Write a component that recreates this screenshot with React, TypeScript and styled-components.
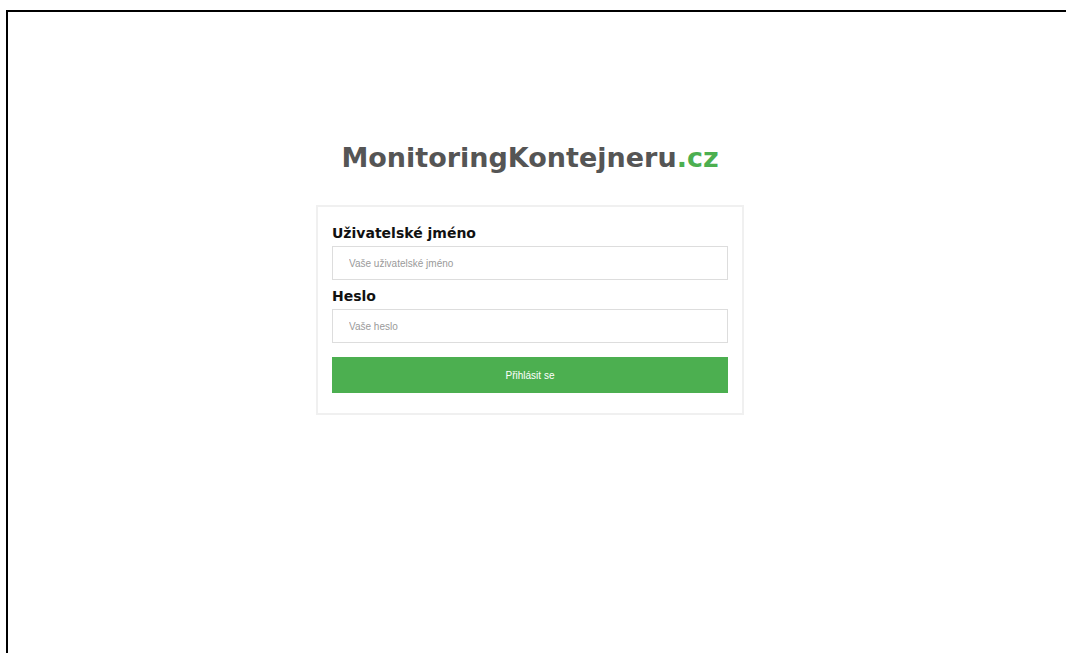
import React from "react";
import styled, { createGlobalStyle } from "styled-components";

const GlobalStyle = createGlobalStyle`
  html, body {
    margin: 0;
    padding: 0;
    background: #fff;
    overflow: hidden;
  }
  body {
    font-family: "DejaVu Sans", Verdana, sans-serif;
  }
`;

// outer page frame: only the top and left edges are in view
const Frame = styled.div`
  margin: 10px 0 0 6px;
  width: 1044px;
  padding-right: 40px;
  height: calc(100vh - 12px);
  border-top: 2px solid #000;
  border-left: 2px solid #000;
  display: flex;
  flex-direction: column;
  align-items: center;
`;

const Logo = styled.h1`
  margin: 126px 0 0;
  font-family: "DejaVu Sans", Verdana, sans-serif;
  font-size: 27px;
  font-weight: bold;
  line-height: 40px;
  color: #555;
`;

const Tld = styled.span`
  color: #4caf50;
`;

const Card = styled.form`
  margin-top: 27px;
  width: 396px;
  padding: 14px 14px 20px;
  border: 2px solid #f0f0f0;
  display: flex;
  flex-direction: column;
`;

const Label = styled.label`
  font-family: "DejaVu Sans", Verdana, sans-serif;
  font-size: 14px;
  font-weight: bold;
  color: #111;
  line-height: 22px;
  margin-top: 1px;
`;

const Input = styled.input`
  box-sizing: border-box;
  width: 100%;
  height: 34px;
  margin: 2px 0 4px;
  padding: 0 16px;
  border: 1px solid #ddd;
  font-family: "Liberation Sans", Arial, sans-serif;
  font-size: 10px;
  color: #333;
  outline: none;
  &::placeholder {
    color: #9a9a9a;
  }
`;

const Submit = styled.button`
  margin-top: 10px;
  height: 36px;
  border: none;
  background: #4caf50;
  color: #fff;
  font-family: "Liberation Sans", Arial, sans-serif;
  font-size: 10px;
  cursor: pointer;
`;

export default function App() {
  return (
    <>
      <GlobalStyle />
      <Frame>
        <Logo>
          MonitoringKontejneru<Tld>.cz</Tld>
        </Logo>
        <Card onSubmit={(e) => e.preventDefault()}>
          <Label htmlFor="user">Uživatelské jméno</Label>
          <Input id="user" type="text" placeholder="Vaše uživatelské jméno" />
          <Label htmlFor="pass">Heslo</Label>
          <Input id="pass" type="password" placeholder="Vaše heslo" />
          <Submit type="submit">Přihlásit se</Submit>
        </Card>
      </Frame>
    </>
  );
}
